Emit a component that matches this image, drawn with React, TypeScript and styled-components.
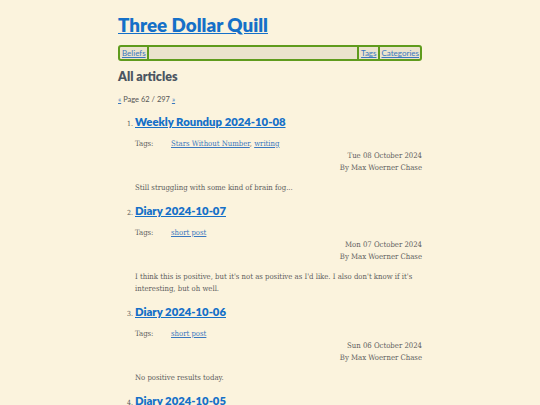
import React from "react";
import styled, { createGlobalStyle } from "styled-components";

const Global = createGlobalStyle`
  html, body { margin: 0; padding: 0; background: #fbf3dd; }
  body { font-family: "DejaVu Serif Condensed", "DejaVu Serif", serif; color: #555; }
`;

const Page = styled.div`
  width: 304px;
  margin: 0 auto;
  padding-top: 13px;
`;

const SiteTitle = styled.h1`
  margin: 0;
  font-family: Lato, "Open Sans", sans-serif;
  font-weight: 800;
  font-size: 18.8px;
  line-height: 24px;
  a { color: #1570c8; }
`;

const Nav = styled.nav`
  margin-top: 8px;
  display: flex;
  border: 2px solid #5f9b1d;
  border-radius: 3px;
  background: #ebe3cd;
  height: 12px;
  font-family: Lato, sans-serif;
  font-size: 8px;
  line-height: 12px;
`;

const NavItem = styled.a<{ $side: "left" | "right" }>`
  color: #3a78bf;
  padding: 0 1px 0 2px;
  ${(p) => (p.$side === "left" ? "border-right: 2px solid #5f9b1d;" : "border-left: 2px solid #5f9b1d;")}
`;

const Spacer = styled.div`
  flex: 1;
`;

const Heading = styled.h2`
  margin: 8px 0 0;
  font-family: Lato, sans-serif;
  font-weight: 800;
  font-size: 12.5px;
  line-height: 16px;
  color: #4b5561;
`;

const Pager = styled.div`
  margin-top: 9px;
  font-family: Lato, sans-serif;
  font-size: 7.5px;
  line-height: 12px;
  color: #555;
  a { color: #3a78bf; }
`;

const List = styled.ol`
  margin: 7px 0 0;
  padding-left: 17px;
  font-size: 7px;
`;

const Item = styled.li`
  margin-bottom: 8px;
  &::marker { color: #555; }
`;

const ItemTitle = styled.h3`
  display: inline;
  margin: 0;
  font-family: Lato, sans-serif;
  font-weight: 800;
  font-size: 11.3px;
  line-height: 18px;
  a { color: #1570c8; }
`;

const Meta = styled.div`
  font-size: 7.7px;
  line-height: 12px;
  color: #5f5f5f;
`;

const TagsRow = styled.div`
  display: flex;
  margin-top: 7px;
  a { color: #3a78bf; }
`;

const TagsLabel = styled.span`
  width: 36px;
`;

const Byline = styled.div`
  text-align: right;
`;

const Summary = styled.p`
  margin: 8px 0 0;
  font-size: 7.7px;
  line-height: 12px;
  color: #5f5f5f;
`;

type Article = {
  title: string;
  tags: string[];
  date: string;
  summary: string;
};

const articles: Article[] = [
  {
    title: "Weekly Roundup 2024-10-08",
    tags: ["Stars Without Number", "writing"],
    date: "Tue 08 October 2024",
    summary: "Still struggling with some kind of brain fog...",
  },
  {
    title: "Diary 2024-10-07",
    tags: ["short post"],
    date: "Mon 07 October 2024",
    summary:
      "I think this is positive, but it's not as positive as I'd like. I also don't know if it's interesting, but oh well.",
  },
  {
    title: "Diary 2024-10-06",
    tags: ["short post"],
    date: "Sun 06 October 2024",
    summary: "No positive results today.",
  },
  {
    title: "Diary 2024-10-05",
    tags: ["short post"],
    date: "Sat 05 October 2024",
    summary: "",
  },
];

export default function App() {
  return (
    <>
      <Global />
      <Page>
        <SiteTitle>
          <a href="#">Three Dollar Quill</a>
        </SiteTitle>
        <Nav>
          <NavItem $side="left" href="#">Beliefs</NavItem>
          <Spacer />
          <NavItem $side="right" href="#">Tags</NavItem>
          <NavItem $side="right" href="#">Categories</NavItem>
        </Nav>
        <Heading>All articles</Heading>
        <Pager>
          <a href="#">«</a> Page 62 / 297 <a href="#">»</a>
        </Pager>
        <List>
          {articles.map((a) => (
            <Item key={a.title}>
              <ItemTitle>
                <a href="#">{a.title}</a>
              </ItemTitle>
              <Meta>
                <TagsRow>
                  <TagsLabel>Tags:</TagsLabel>
                  <span>
                    {a.tags.map((t, i) => (
                      <React.Fragment key={t}>
                        {i > 0 && ", "}
                        <a href="#">{t}</a>
                      </React.Fragment>
                    ))}
                  </span>
                </TagsRow>
                <Byline>{a.date}</Byline>
                <Byline>By Max Woerner Chase</Byline>
              </Meta>
              {a.summary && <Summary>{a.summary}</Summary>}
            </Item>
          ))}
        </List>
      </Page>
    </>
  );
}
